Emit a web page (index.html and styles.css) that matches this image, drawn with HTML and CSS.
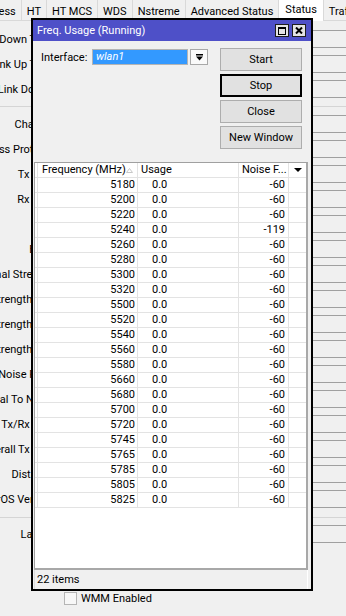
FILE: index.html
```html
<!DOCTYPE html>
<html lang="en">
<head>
  <meta charset="UTF-8">
  <title>Freq. Usage (Running)</title>
  <meta name="viewport" content="width=device-width, initial-scale=1.0">
  <link rel="stylesheet" href="styles.css">
</head>
<body>
  <div id="iface-window">
    <div id="tabs">
      <div class="tab">Wireless</div>
      <div class="tab">HT</div>
      <div class="tab">HT MCS</div>
      <div class="tab">WDS</div>
      <div class="tab">Nstreme</div>
      <div class="tab">Advanced Status</div>
      <div class="tab active">Status</div>
      <div class="tab">Traffic</div>
    </div>

    <div id="status-form">
      <div class="row"><label>Last Link Down Time:</label><div class="field"></div></div>
      <div class="row"><label>Last Link Up Time:</label><div class="field"></div></div>
      <div class="row"><label>Link Downs:</label><div class="field"></div></div>
      <div class="divider"></div>
      <div class="row"><label>Channel:</label><div class="field"></div></div>
      <div class="row"><label>Wireless Protocol:</label><div class="field"></div></div>
      <div class="row"><label>Tx Rate:</label><div class="field"></div></div>
      <div class="row"><label>Rx Rate:</label><div class="field"></div></div>
      <div class="row"><label></label><div class="field"></div></div>
      <div class="row"><label>Band:</label><div class="field"></div></div>
      <div class="row"><label>Signal Strength:</label><div class="field"></div></div>
      <div class="row"><label>Signal Strength Ch0:</label><div class="field"></div></div>
      <div class="row"><label>Signal Strength Ch1:</label><div class="field"></div></div>
      <div class="row"><label>Signal Strength Ch2:</label><div class="field"></div></div>
      <div class="row"><label>Noise Floor:</label><div class="field"></div></div>
      <div class="row"><label>Signal To Noise:</label><div class="field"></div></div>
      <div class="row"><label>Tx/Rx CCQ:</label><div class="field"></div></div>
      <div class="row"><label>Overall Tx CCQ:</label><div class="field"></div></div>
      <div class="row"><label>Distance:</label><div class="field"></div></div>
      <div class="row"><label>RouterOS Version:</label><div class="field"></div></div>
      <div class="divider second"></div>
      <div class="row"><label>Last IP:</label><div class="field"></div></div>
      <div class="check-row"><span class="checkbox"></span>WMM Enabled</div>
    </div>
  </div>

  <div id="freq-dialog">
    <div class="title-bar">
      <span class="title">Freq. Usage (Running)</span>
      <span class="tb-btn">
        <svg width="8" height="8" viewBox="0 0 8 8"><rect x="0.5" y="0.5" width="7" height="7" fill="none" stroke="#000"/><rect x="0" y="0" width="8" height="2" fill="#000"/></svg>
      </span>
      <span class="tb-btn">
        <svg width="8" height="7" viewBox="0 0 8 7"><path d="M1 0.5 L7 6.5 M7 0.5 L1 6.5" stroke="#000" stroke-width="2"/></svg>
      </span>
    </div>

    <div class="dlg-top">
      <div class="iface">
        <span class="iface-label">Interface:</span>
        <span class="iface-input">wlan1</span>
        <span class="iface-drop">
          <svg width="7" height="7" viewBox="0 0 7 7"><rect x="0" y="0" width="7" height="1.5" fill="#000"/><path d="M0 2.5 H7 L3.5 6.5 Z" fill="#000"/></svg>
        </span>
      </div>
      <div class="buttons">
        <button>Start</button>
        <button class="default">Stop</button>
        <button>Close</button>
        <button>New Window</button>
      </div>
    </div>

    <div class="grid">
      <div class="grid-head">
        <span></span>
        <span class="sortable"><span class="head-text">Frequency (MHz)</span>
          <svg width="7" height="5" viewBox="0 0 7 5"><path d="M0.5 4.5 L3.5 0.5 L6.5 4.5 Z" fill="none" stroke="#c8c8c8"/></svg>
        </span>
        <span>Usage</span>
        <span>Noise F...</span>
        <span class="menu">
          <svg width="8" height="4" viewBox="0 0 8 4"><path d="M0 0 H8 L4 4 Z" fill="#000"/></svg>
        </span>
      </div>
      <div id="grid-rows"></div>
    </div>
    <div class="status-bar">22 items</div>
  </div>

  <script>
    const freqs = [5180, 5200, 5220, 5240, 5260, 5280, 5300, 5320, 5500, 5520, 5540,
                   5560, 5580, 5660, 5680, 5700, 5720, 5745, 5765, 5785, 5805, 5825];

    const rows = document.getElementById("grid-rows");
    freqs.forEach(freq => {
      const noise = freq === 5240 ? -119 : -60;
      const row = document.createElement("div");
      row.className = "grid-row";
      row.innerHTML = `<span></span><span class="num">${freq}</span><span class="usage">0.0</span><span class="num">${noise}</span><span></span>`;
      rows.appendChild(row);
    });
  </script>
</body>
</html>
```

FILE: styles.css
```css
body {
  margin: 0;
  width: 346px;
  height: 616px;
  overflow: hidden;
  position: relative;
  background: #f0f0f0;
  font-family: Roboto, 'Liberation Sans', sans-serif;
  font-size: 11px;
  color: #000;
}

/* background interface window */

#tabs {
  display: flex;
  height: 21px;
  margin-left: -31px;
  border-bottom: 1px solid #d9d9d9;
  box-sizing: border-box;
}

.tab {
  padding: 4px 5px 0;
  line-height: 16px;
  border-right: 1px solid #d9d9d9;
  white-space: nowrap;
}

.tab.active {
  height: 21px;
  padding: 2px 6px 0;
  margin-left: -1px;
  border-left: 1px solid #d9d9d9;
  background: #fff;
  box-sizing: border-box;
}

#status-form {
  display: flex;
  flex-direction: column;
  gap: 7px;
  padding-top: 9px;
}

.row {
  display: flex;
  align-items: center;
  height: 18px;
}

.row label {
  display: flex;
  justify-content: flex-end;
  width: 57px;
  flex-shrink: 0;
  white-space: nowrap;
}

.field {
  flex: 1;
  height: 18px;
  margin-left: 6px;
  margin-right: -6px;
  border-top: 1px solid #a0a0a0;
  border-bottom: 1px solid #a0a0a0;
  box-sizing: border-box;
}

.divider {
  height: 1px;
  margin: 1px 0;
  background: #d5d5d5;
}

.divider.second {
  margin: 2px 0 0;
}

.check-row {
  display: flex;
  align-items: center;
  margin-top: 42px;
  padding-left: 64px;
}

.checkbox {
  width: 13px;
  height: 13px;
  margin-right: 4px;
  border: 1px solid #b5b5b5;
  background: #f7f7f7;
  box-sizing: border-box;
}

/* freq usage dialog */

#freq-dialog {
  position: absolute;
  left: 31px;
  top: 18px;
  width: 282px;
  height: 573px;
  border: 2px solid #000;
  background: #f0f0f0;
  box-sizing: border-box;
  display: flex;
  flex-direction: column;
}

.title-bar {
  display: flex;
  align-items: center;
  height: 21px;
  padding: 0 5px 0 4px;
  background: #4e50c8;
  color: #fff;
  flex-shrink: 0;
}

.title-bar .title {
  flex: 1;
}

.tb-btn {
  display: flex;
  align-items: center;
  justify-content: center;
  width: 14px;
  height: 13px;
  margin-left: 3px;
  border: 1px solid #1e1e1e;
  background: #e4e4e4;
  box-sizing: border-box;
}

.dlg-top {
  display: flex;
  justify-content: space-between;
  padding: 7px 9px 0 8px;
  flex-shrink: 0;
}

.iface {
  display: flex;
  align-items: center;
  height: 16px;
  margin-top: 1px;
}

.iface-label {
  width: 51px;
}

.iface-input {
  width: 96px;
  height: 16px;
  padding-left: 3px;
  line-height: 14px;
  border: 1px solid #b4b4b4;
  background: #3399ff;
  color: #fff;
  font-style: italic;
  box-sizing: border-box;
}

.iface-drop {
  display: flex;
  align-items: center;
  justify-content: center;
  width: 18px;
  height: 16px;
  margin-left: 2px;
  border: 1px solid #a8a8a8;
  background: #fafafa;
  box-sizing: border-box;
}

.buttons {
  display: flex;
  flex-direction: column;
  gap: 3px;
  width: 82px;
}

button {
  height: 23px;
  padding: 0;
  border: 1px solid #adadad;
  background: #e1e1e1;
  font-family: inherit;
  font-size: 11px;
  color: #000;
}

button.default {
  border: 2px solid #000;
}

.grid {
  height: 408px;
  margin: 13px 3px 0 1px;
  border: 1px solid #a0a0a0;
  border-right: 2px solid #a8a8a8;
  border-bottom: 2px solid #a8a8a8;
  background: #fff;
  box-sizing: border-box;
  flex-shrink: 0;
}

.grid-head,
.grid-row {
  display: grid;
  grid-template-columns: 3px 100px 101px 50px 17px;
  height: 15px;
  border-bottom: 1px solid #e3e3e3;
  box-sizing: border-box;
  line-height: 14px;
  white-space: nowrap;
}

.grid-head > span,
.grid-row > span {
  border-right: 1px solid #e3e3e3;
  overflow: hidden;
}

.grid-head > span {
  padding-left: 3px;
}

.grid-head > span:first-child,
.grid-row > span:first-child {
  padding: 0;
}

.grid-head .sortable {
  display: flex;
  align-items: center;
  justify-content: space-between;
  padding: 0 4px 0 4px;
}

.grid-head .menu {
  display: flex;
  align-items: center;
  justify-content: center;
  padding: 0;
  border-right: none;
}

.grid-row > span:last-child {
  border-right: none;
}

.grid-row .num {
  text-align: right;
  padding-right: 2px;
}

.grid-row .num:nth-child(4) {
  padding-right: 3px;
}

.grid-row .usage {
  padding-left: 14px;
}

.status-bar {
  display: flex;
  align-items: center;
  height: 19px;
  margin: 0 3px 0 1px;
  padding-left: 2px;
  border-left: 1px solid #dadada;
  border-right: 1px solid #fff;
  flex-shrink: 0;
}
```
